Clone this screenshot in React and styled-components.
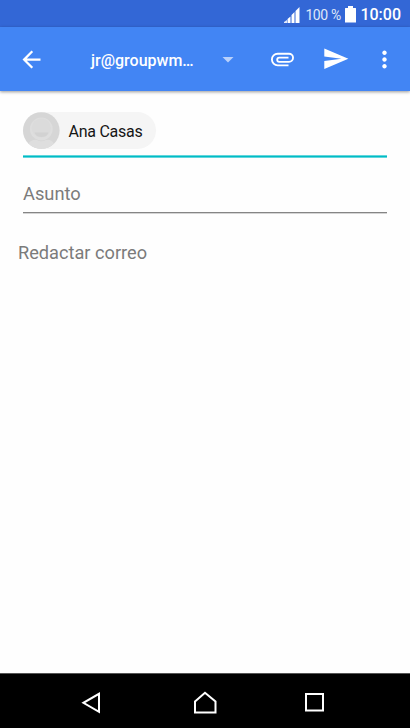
import styled, { createGlobalStyle } from 'styled-components'

const GlobalStyle = createGlobalStyle`
    * {
        box-sizing: border-box;
    }

    body {
        margin: 0;
        font-family: Roboto, sans-serif;
        background-color: #fff;
    }

    svg {
        display: block;
        flex: none;
    }
`

const Screen = styled.div`
    display: flex;
    flex-flow: column;
    width: 100%;
    height: 100vh;
    overflow: hidden;
    background-color: #fefefe;
`

const StatusBar = styled.div`
    display: flex;
    flex: none;
    align-items: center;
    justify-content: flex-end;
    height: 27px;
    padding: 2px 9px 0 0;
    color: #fff;
    background-color: #3367d6;
`

const Percent = styled.span`
    width: 36px;
    margin: 0 4px 0 5px;
    font-size: 14px;
    letter-spacing: -0.4px;
    white-space: nowrap;
    color: #dfe7f9;
`

const Clock = styled.span`
    margin-left: 4px;
    font-size: 16px;
    font-weight: 500;
`

const AppBar = styled.header`
    display: flex;
    flex: none;
    align-items: center;
    height: 64px;
    padding: 0 12px 0 18px;
    color: #fff;
    background-color: #4285f4;
    box-shadow: 0 1px 3px rgba(0, 0, 0, 0.4);
`

const Account = styled.div`
    display: flex;
    flex: 1;
    align-items: center;
    justify-content: space-between;
    margin: 2px 36px 0 46px;
    font-size: 16px;
    font-weight: 500;
`

const Actions = styled.div`
    display: flex;
    align-items: center;
    gap: 21.75px;
`

const Form = styled.main`
    display: flex;
    flex: 1;
    flex-flow: column;
    padding: 21px 23px 0;
`

const Recipients = styled.div`
    height: 46px;
    background: linear-gradient(#62d6dc 1px, #00bcc6 1px 2px, #62d6dc 2px) bottom / 100% 3px no-repeat;
`

const Chip = styled.div`
    display: inline-flex;
    align-items: center;
    height: 37px;
    padding-right: 14px;
    gap: 8.5px;
    border-radius: 19px;
    font-size: 16px;
    letter-spacing: -0.26px;
    color: #161616;
    background-color: #f5f5f5;
`

const ChipName = styled.span`
    padding-top: 1px;
`

const Subject = styled.div`
    height: 55px;
    padding-top: 25px;
    border-bottom: 1px solid #858585;
    box-shadow: 0 1px 0 #d4d4d4;
    font-size: 18.3px;
    line-height: 22px;
    color: #7b7b7b;
`

const Body = styled.div`
    margin: 29px 0 0 -5px;
    font-size: 18.2px;
    line-height: 22px;
    color: #7b7b7b;
`

const NavBar = styled.nav`
    display: flex;
    flex: none;
    align-items: center;
    gap: 85px;
    height: 55px;
    padding: 3px 0 0 78.5px;
    border-top: 1px solid #555;
    background-color: #000;
`

function Icon({ d, size = 27 }) {
    return (
        <svg width={size} height={size} viewBox="0 0 24 24" fill="currentColor">
            <path d={d} />
        </svg>
    )
}

function Paperclip() {
    return (
        <svg width="30" height="15" viewBox="0 0 30 15" fill="none" stroke="currentColor" strokeWidth="1.85">
            <path d="M18.5 13.3H7.7A5.8 5.8 0 0 1 7.7 1.7H19A4.05 4.05 0 0 1 19 9.8H9.3A2.1 2.1 0 0 1 9.3 5.6H18.5" />
        </svg>
    )
}

function Signal() {
    return (
        <svg width="16" height="16" viewBox="0 0 16 16" fill="#fff">
            <path d="M0 16V15L3 13V16Z" opacity=".85" />
            <path d="M3.5 16V12L6.5 9.5V16ZM7.5 16V8L10.5 5V16ZM11.5 16V4L15.5 0V16Z" />
        </svg>
    )
}

function Battery() {
    return (
        <svg width="11" height="17" viewBox="0 0 11 17" fill="#fff">
            <path d="M3 0H8V2H10.5Q11 2 11 2.5V16.5H0V2.5Q0 2 .5 2H3Z" />
        </svg>
    )
}

function Avatar() {
    return (
        <svg width="37" height="37" viewBox="0 0 37 37">
            <circle cx="18.3" cy="18.5" r="18.3" fill="#d6d6d6" />
            <path d="M5.5 31.5Q9 27 14 28Q18.3 30.5 23 28Q28 27 31 31.5Q25.5 36.8 18.3 36.8Q11 36.8 5.5 31.5Z" fill="#dedede" />
            <circle cx="18.3" cy="17" r="11.4" fill="#dedede" />
            <circle cx="18.3" cy="16" r="9.6" fill="#dbdbdb" />
            <path d="M11.5 20.5H25.5Q24 25 18.5 25Q13 25 11.5 20.5Z" fill="#d2d2d2" />
        </svg>
    )
}

function App() {
    return (
        <>
            <GlobalStyle />
            <Screen>
                <StatusBar>
                    <Signal />
                    <Percent>100 %</Percent>
                    <Battery />
                    <Clock>10:00</Clock>
                </StatusBar>
                <AppBar>
                    <Icon d="M20 11H7.83l5.59-5.59L12 4l-8 8 8 8 1.41-1.41L7.83 13H20v-2z" />
                    <Account>
                        jr@groupwm…
                        <svg width="12" height="6" viewBox="0 0 12 6">
                            <path d="M0.5 0H11.5L6 5.5Z" fill="#b9d1fb" />
                        </svg>
                    </Account>
                    <Actions>
                        <Paperclip />
                        <Icon size={27.5} d="M2.01 21L23 12 2.01 3 2 10l15 2-15 2z" />
                        <Icon d="M12 8c1.1 0 2-.9 2-2s-.9-2-2-2-2 .9-2 2 .9 2 2 2zm0 2c-1.1 0-2 .9-2 2s.9 2 2 2 2-.9 2-2-.9-2-2-2zm0 6c-1.1 0-2 .9-2 2s.9 2 2 2 2-.9 2-2-.9-2-2-2z" />
                    </Actions>
                </AppBar>
                <Form>
                    <Recipients>
                        <Chip>
                            <Avatar />
                            <ChipName>Ana Casas</ChipName>
                        </Chip>
                    </Recipients>
                    <Subject>Asunto</Subject>
                    <Body>Redactar correo</Body>
                </Form>
                <NavBar>
                    <svg width="29" height="24" viewBox="0 0 29 24" fill="none" stroke="#fff" strokeWidth="2">
                        <path d="M20 2.8V20.8L4.4 11.8Z" />
                    </svg>
                    <svg width="24" height="24" viewBox="0 0 24 24" fill="none" stroke="#fff" strokeWidth="2">
                        <path d="M2 10.5L12 1.8L22.5 10.5V21.5H2Z" />
                    </svg>
                    <svg width="24" height="24" viewBox="0 0 24 24" fill="none" stroke="#fff" strokeWidth="2">
                        <path d="M4 3H21V19.5H4Z" />
                    </svg>
                </NavBar>
            </Screen>
        </>
    )
}

export default App
